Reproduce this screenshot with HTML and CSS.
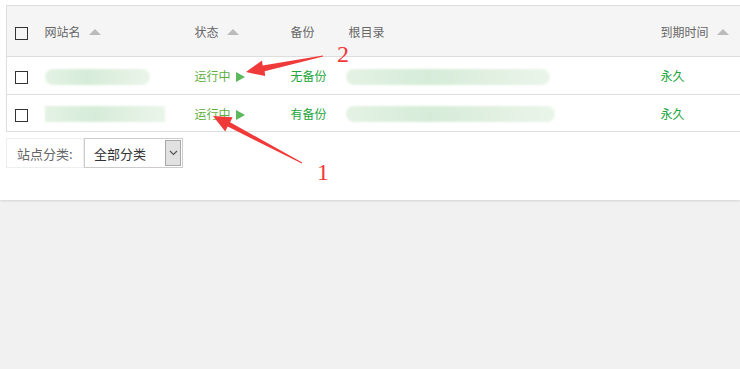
FILE: index.html
```html
<!DOCTYPE html>
<html lang="zh-CN">
<head>
    <meta charset="UTF-8">
    <title>网站</title>
    <link rel="stylesheet" href="styles.css">
</head>
<body>
    <div class="panel">
        <table class="site-table">
            <colgroup>
                <col class="c-check"><col class="c-name"><col class="c-status"><col class="c-backup"><col class="c-path"><col class="c-end">
            </colgroup>
            <thead>
                <tr>
                    <th><span class="cb"></span></th>
                    <th>网站名 <span class="sort"></span></th>
                    <th>状态 <span class="sort"></span></th>
                    <th>备份</th>
                    <th>根目录</th>
                    <th>到期时间 <span class="sort"></span></th>
                </tr>
            </thead>
            <tbody>
                <tr>
                    <td><span class="cb"></span></td>
                    <td><span class="blur w105"></span></td>
                    <td class="running">运行中 <span class="play"></span></td>
                    <td class="bak">无备份</td>
                    <td><span class="blur w204"></span></td>
                    <td class="forever">永久</td>
                </tr>
                <tr class="row-last">
                    <td><span class="cb"></span></td>
                    <td><span class="blur w120"></span></td>
                    <td class="running">运行中 <span class="play"></span></td>
                    <td class="bak">有备份</td>
                    <td><span class="blur w209"></span></td>
                    <td class="forever">永久</td>
                </tr>
            </tbody>
        </table>

        <div class="filter">
            <span class="filter-label">站点分类:</span>
            <div class="fake-select">
                <span>全部分类</span>
                <span class="drop">
                    <svg width="9" height="6" viewBox="0 0 9 6"><path d="M1 1l3.5 3.5L8 1" fill="none" stroke="#555" stroke-width="1.2"/></svg>
                </span>
            </div>
        </div>
    </div>

    <!-- annotation arrows -->
    <svg class="marks" width="740" height="369" viewBox="0 0 740 369">
        <polygon fill="#f03a3a" points="246,72 265.2,76.1 264.6,71.2 323.1,56.5 322.9,55.5 262.6,65.4 262,60.5"/>
        <polygon fill="#f03a3a" points="213,116 232.6,117.3 230.1,122.2 302.2,162.6 301.8,163.4 227.7,126.6 225.2,131.5"/>
        <text x="337" y="62" class="num">2</text>
        <text x="317" y="180" class="num">1</text>
    </svg>
</body>
</html>
```
FILE: styles.css
```css
body {
    margin: 0;
    background-color: #f1f1f1;
    font-family: "Noto Sans CJK SC", "Liberation Sans", sans-serif;
    font-size: 12px;
    color: #666;
    position: relative;
    width: 740px;
    height: 369px;
    overflow: hidden;
}
.panel {
    background-color: #fff;
    height: 200px;
    padding-top: 5px;
    box-sizing: border-box;
    box-shadow: 0 1px 2px rgba(0, 0, 0, 0.12);
}
.site-table {
    margin-left: 6px;
    width: 740px;
    border-collapse: collapse;
    table-layout: fixed;
    border-top: 1px solid #ddd;
    border-left: 1px solid #ddd;
}
.c-check { width: 30px; }
.c-name { width: 150px; }
.c-status { width: 96px; }
.c-backup { width: 58px; }
.c-path { width: 312px; }
.site-table th {
    background-color: #f5f5f5;
    font-weight: normal;
    text-align: left;
    height: 50px;
    padding: 0 0 0 8px;
    border-bottom: 1px solid #ddd;
    color: #666;
}
.site-table td {
    height: 37px;
    padding: 0 0 0 8px;
    border-bottom: 1px solid #ddd;
}
.site-table .row-last td {
    height: 36px;
}
.cb {
    display: inline-block;
    width: 11px;
    height: 11px;
    border: 1px solid #333;
    vertical-align: middle;
}
.sort {
    display: inline-block;
    width: 0;
    height: 0;
    border-left: 6px solid transparent;
    border-right: 6px solid transparent;
    border-bottom: 6px solid #bbb;
    margin-left: 6px;
    vertical-align: 2px;
}
.running {
    color: #5eae3c;
}
.play {
    display: inline-block;
    width: 0;
    height: 0;
    border-top: 5px solid transparent;
    border-bottom: 5px solid transparent;
    border-left: 9px solid #5cb85c;
    margin-left: 3px;
    vertical-align: -1px;
}
.bak {
    color: #20a53a;
}
.forever {
    color: #20a53a;
}
.blur {
    display: inline-block;
    height: 16px;
    border-radius: 8px;
    background: linear-gradient(90deg, #e4f2e4, #d6ecd9 40%, #e1f0e1 70%, #eaf5ea);
    vertical-align: middle;
    filter: blur(1px);
}
.w105 { width: 105px; }
.w120 { width: 120px; border-radius: 0; }
.w204 { width: 204px; margin-left: -3px; }
.w209 { width: 209px; margin-left: -3px; }
.filter {
    display: flex;
    margin: 6px 0 0 6px;
    height: 30px;
}
.filter-label {
    display: flex;
    align-items: center;
    padding: 0 10px;
    border: 1px solid #eee;
    width: 56px;
    color: #666;
    font-size: 13px;
}
.fake-select {
    display: flex;
    align-items: center;
    justify-content: space-between;
    width: 97px;
    border: 1px solid #ccc;
    color: #333;
    font-size: 13px;
}
.fake-select span:first-child {
    padding-left: 9px;
}
.drop {
    display: flex;
    align-items: center;
    justify-content: center;
    width: 16px;
    height: 26px;
    margin-right: 1px;
    background-color: #e1e1e1;
    border: 1px solid #a8a8a8;
    box-sizing: border-box;
}
.marks {
    position: absolute;
    left: 0;
    top: 0;
}
.num {
    fill: #f03a3a;
    font-family: "Liberation Serif", serif;
    font-size: 24px;
}
```
